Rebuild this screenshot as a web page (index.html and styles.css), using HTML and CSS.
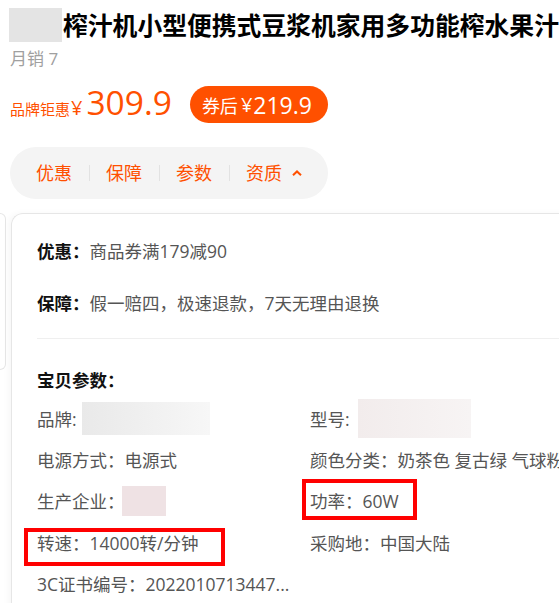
FILE: index.html
```html
<!DOCTYPE html>
<html lang="zh-CN">
<head>
    <meta charset="UTF-8">
    <meta name="viewport" content="width=device-width, initial-scale=1.0">
    <title>商品详情</title>
    <link rel="stylesheet" href="styles.css">
</head>
<body>
    <div class="page">
        <div class="title-row">
            <span class="shop-mark"></span>
            <h1 class="title">榨汁机小型便携式豆浆机家用多功能榨水果汁</h1>
        </div>
        <div class="sales">月销 7</div>

        <div class="price-row">
            <div class="price">
                <span class="price-tag">品牌钜惠</span><span class="yen">¥</span><span class="num">309.9</span>
            </div>
            <div class="coupon"><span class="coupon-label">券后</span><span class="coupon-yen">¥</span><span class="coupon-num">219.9</span></div>
        </div>

        <div class="tabs">
            <span class="tab">优惠</span>
            <span class="tab-sep"></span>
            <span class="tab">保障</span>
            <span class="tab-sep"></span>
            <span class="tab">参数</span>
            <span class="tab-sep"></span>
            <span class="tab">资质</span>
            <svg class="tab-arrow" width="10" height="6" viewBox="0 0 10 6"><polyline points="1,5.2 5,1.4 9,5.2" fill="none" stroke="#ff5000" stroke-width="2"/></svg>
        </div>

        <div class="panels">
            <div class="panel-peek"></div>
            <div class="panel">
                <div class="info-row"><b>优惠：</b>商品券满179减90</div>
                <div class="info-row second"><b>保障：</b>假一赔四，极速退款，7天无理由退换</div>
                <div class="divider"></div>
                <div class="params-title">宝贝参数：</div>
                <div class="params">
                    <div class="param">品牌:<span class="blur blur-brand"></span></div>
                    <div class="param">型号:<span class="blur blur-model"></span></div>
                    <div class="param">电源方式：电源式</div>
                    <div class="param">颜色分类：奶茶色 复古绿 气球粉</div>
                    <div class="param">生产企业：<span class="blur blur-maker"></span></div>
                    <div class="param marked mark-power">功率：60W</div>
                    <div class="param marked mark-speed">转速：14000转/分钟</div>
                    <div class="param">采购地：中国大陆</div>
                    <div class="param">3C证书编号：2022010713447...</div>
                </div>
            </div>
        </div>
    </div>
</body>
</html>
```

FILE: styles.css
```css
body { margin: 0; overflow: hidden; background: #fff; font-family: "Open Sans", "Noto Sans CJK SC", sans-serif; color: #333; }
.page { padding: 8px 0 0 10px; width: 600px; }

.title-row { display: flex; align-items: center; height: 34px; margin-left: -1px; }
.shop-mark { width: 53px; height: 34px; background: #e4e4e4; flex: none; }
.title { margin: 0 0 0 1px; font-size: 24.8px; line-height: 34px; font-weight: bold; color: #000; white-space: nowrap; }
.sales { margin-top: 5px; font-size: 17px; line-height: 24px; color: #a0a0a0; }

.price-row { display: flex; align-items: center; height: 37px; margin-top: 15px; }
.price { color: #ff5000; line-height: 37px; margin-top: 3px; white-space: nowrap; }
.price-tag { font-size: 15px; }
.yen { font-size: 20px; margin-left: 1px; }
.num { font-size: 33.5px; margin-left: 4px; }
.coupon { box-sizing: border-box; width: 138px; height: 37px; margin-left: 18px; padding-left: 12px; border-radius: 19px; background: #ff5000; color: #fff; display: flex; align-items: center; white-space: nowrap; }
.coupon-label { font-size: 18px; }
.coupon-yen { font-size: 20px; margin-left: 3px; }
.coupon-num { font-size: 23px; margin-left: 1px; }

.tabs { display: inline-flex; align-items: center; height: 52px; margin-top: 24px; padding: 0 26px; border-radius: 26px; background: #f4f4f4; }
.tab { font-size: 18px; line-height: 24px; color: #ff5000; }
.tab-sep { width: 1px; height: 16px; margin: 0 16px 0 17px; background: #e2e2e2; }
.tab-arrow { margin-left: 10px; }

.panels { display: flex; margin: 14px 0 0 -10px; }
.panel-peek { box-sizing: border-box; width: 6px; height: 157px; border: 1px solid #e6e6e6; border-left: none; border-radius: 0 12px 12px 0; flex: none; }
.panel { box-sizing: border-box; width: 560px; height: 420px; margin-left: 5px; padding: 23px 0 0 25px; border: 1px solid #e6e6e6; border-right: none; border-bottom: none; border-radius: 12px 0 0 0; box-shadow: -3px 0 6px rgba(0,0,0,0.03); flex: none; }

.info-row { font-size: 17.5px; line-height: 29px; color: #555; white-space: nowrap; }
.info-row b { color: #111; }
.info-row.second { margin-top: 23px; }
.divider { height: 1px; margin-top: 20px; background: #efefef; }
.params-title { margin-top: 27px; font-size: 17.5px; line-height: 29px; font-weight: bold; color: #111; }

.params { display: grid; grid-template-columns: 273px auto; grid-template-rows: repeat(3, 41px) 42px 41px; margin-top: 3px; font-size: 17.5px; color: #555; }
.param { display: flex; align-items: center; white-space: nowrap; }
.blur { display: inline-block; }
.blur-brand { width: 128px; height: 33px; margin-left: 5px; background: linear-gradient(90deg, #e9e9e9, #f7f7f7); }
.blur-model { width: 113px; height: 39px; margin-left: 8px; background: linear-gradient(90deg, #f2ecec, #f7f4f4); }
.blur-maker { width: 44px; height: 30px; margin-left: -3px; background: #efe2e4; }

.marked { position: relative; }
.marked::after { content: ""; position: absolute; box-sizing: border-box; border: 4px solid #ff0000; }
.mark-power::after { left: -8px; top: -1px; width: 115px; height: 41px; }
.mark-speed::after { left: -13px; top: 7px; width: 201px; height: 38px; }
```
